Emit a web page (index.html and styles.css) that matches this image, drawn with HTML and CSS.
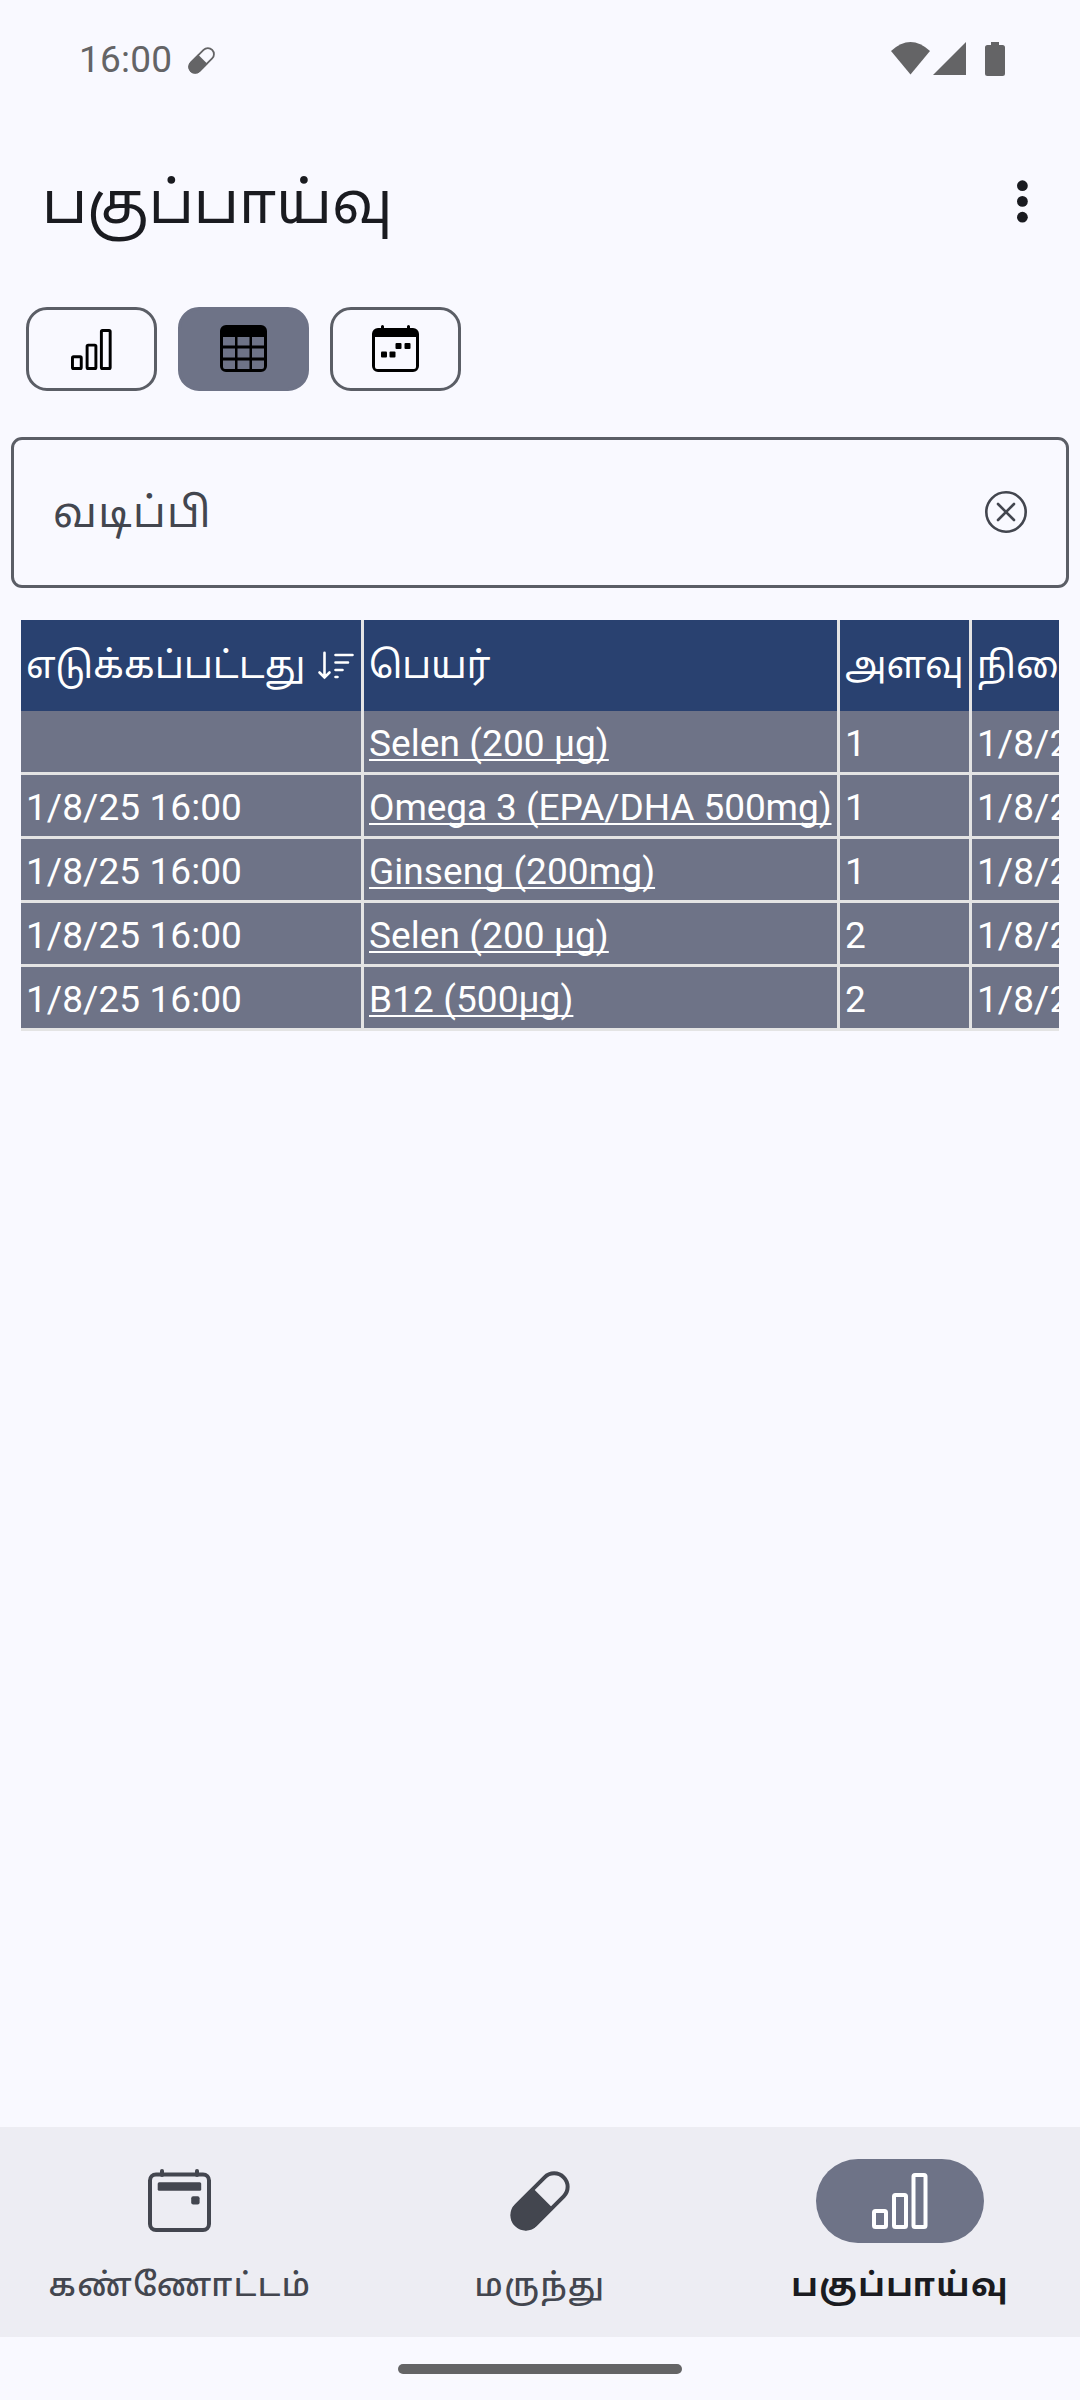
FILE: index.html
```html
<!DOCTYPE html>
<html lang="ta">
<head>
<meta charset="utf-8">
<title>பகுப்பாய்வு</title>
<link rel="stylesheet" href="styles.css">
</head>
<body>
<div class="screen">
  <header class="status">
    <span class="clock">16:00</span>
    <svg class="status-pill" viewBox="0 0 60 60"><g transform="rotate(-45 30 30)"><rect x="-3.500" y="16.500" width="67" height="27" rx="13.500" fill="none" stroke="currentColor" stroke-width="4"/><path d="M34 15H10a15 15 0 0 0 0 30H34Z" fill="currentColor"/></g></svg>
    <svg class="signals" viewBox="0 0 114 34"><g fill="currentColor"><path d="M0 9Q19.500-9 39 9L19.500 32.500Z"/><path d="M75 0V33H42Z"/><path d="M100 0h8v3h3.500q2.500 0 2.500 2.500v26q0 2.500-2.500 2.500h-15q-2.500 0-2.500-2.500v-26Q94 3 96.500 3H100Z"/></g></svg>
  </header>
  <div class="appbar">
    <h1 class="title">பகுப்பாய்வு</h1>
    <svg class="more" viewBox="0 0 12 44" fill="currentColor"><circle cx="6.400" cy="5.700" r="5.400"/><circle cx="6.400" cy="21.400" r="5.400"/><circle cx="6.400" cy="37.200" r="5.400"/></svg>
  </div>
  <div class="toggles">
    <button class="toggle"><svg class="icon-bars" viewBox="0 0 56 56" fill="none" stroke="currentColor" stroke-width="4"><rect x="2" y="38" width="12" height="16" rx="1.500"/><rect x="22" y="22" width="12" height="32" rx="1.500"/><rect x="41.500" y="2" width="12" height="52" rx="1.500"/></svg></button>
    <button class="toggle toggle-on"><svg class="icon-grid" viewBox="0 0 47 47"><path d="M6 0h35a6 6 0 0 1 6 6v35a6 6 0 0 1-6 6H6a6 6 0 0 1-6-6V6a6 6 0 0 1 6-6ZM3 12v8.500h12V12ZM17.500 12v8.500h12V12ZM32 12v8.500h12V12ZM3 23.500v9h12v-9ZM17.500 23.500v9h12v-9ZM32 23.500v9h12v-9ZM3 35.500V42q0 2 2 2h10v-8.500ZM17.500 35.500V44h12v-8.500ZM32 35.500V44h10q2 0 2-2v-6.500Z" fill="currentColor" fill-rule="evenodd"/></svg></button>
    <button class="toggle"><svg class="icon-grid" viewBox="0 0 47 47"><path d="M9 1.500q0-1.500 1.500-1.500T12 1.500V3H35V1.500Q35 0 36.500 0T38 1.500V3h3a6 6 0 0 1 6 6v32a6 6 0 0 1-6 6H6a6 6 0 0 1-6-6V9a6 6 0 0 1 6-6h3ZM3 12v30q0 2 2 2h37q2 0 2-2V12Z" fill="currentColor" fill-rule="evenodd"/><g fill="currentColor"><rect x="9" y="26.500" width="6" height="6" rx="1"/><rect x="17.500" y="26.500" width="6" height="6" rx="1"/><rect x="23.500" y="18" width="6" height="6" rx="1"/><rect x="32.500" y="18" width="6" height="6" rx="1"/></g></svg></button>
  </div>
  <div class="filter">
    <span class="filter-label">வடிப்பி</span>
    <svg class="clear" viewBox="0 0 42 42" fill="none" stroke="currentColor" stroke-width="2.600" stroke-linecap="round"><circle cx="21" cy="21" r="19.700"/><path d="M13 13L29 29M29 13L13 29"/></svg>
  </div>
  <div class="table">
    <div class="row head">
      <div class="cell"><span class="taken">எடுக்கப்பட்டது</span><svg class="sort" viewBox="0 0 36 28" fill="none" stroke="currentColor" stroke-width="2.600" stroke-linecap="round"><path d="M6.500 .8V25.500M1.500 20.500l5 5 5-5M17.500 3H34.500M17.500 10.500H30M17.500 18H24.500M17.500 25H19.500"/></svg></div>
      <div class="cell">பெயர்</div>
      <div class="cell">அளவு</div>
      <div class="cell">நினைவூட்டப்பட்டது</div>
    </div>
    <div class="row"><div class="cell"></div><div class="cell"><a class="name">Selen (200 µg)</a></div><div class="cell">1</div><div class="cell">1/8/25 16:00</div></div>
    <div class="row"><div class="cell">1/8/25 16:00</div><div class="cell"><a class="name name-long">Omega 3 (EPA/DHA 500mg)</a></div><div class="cell">1</div><div class="cell">1/8/25 16:00</div></div>
    <div class="row"><div class="cell">1/8/25 16:00</div><div class="cell"><a class="name">Ginseng (200mg)</a></div><div class="cell">1</div><div class="cell">1/8/25 16:00</div></div>
    <div class="row"><div class="cell">1/8/25 16:00</div><div class="cell"><a class="name">Selen (200 µg)</a></div><div class="cell">2</div><div class="cell">1/8/25 16:00</div></div>
    <div class="row"><div class="cell">1/8/25 16:00</div><div class="cell"><a class="name">B12 (500µg)</a></div><div class="cell">2</div><div class="cell">1/8/25 16:00</div></div>
  </div>
  <nav class="nav">
    <div class="tab">
      <span class="indicator"><svg class="nav-icon" viewBox="0 0 63 63"><rect x="2" y="5.500" width="59" height="55.500" rx="6" fill="none" stroke="currentColor" stroke-width="4"/><g fill="currentColor"><rect x="12" y="0" width="4" height="8" rx="2"/><rect x="47" y="0" width="4" height="8" rx="2"/><rect x="9.700" y="13.300" width="43.500" height="8.400" rx="1.500"/><rect x="43.200" y="27.200" width="8.400" height="8.400" rx="2"/></g></svg></span>
      <span class="label">கண்ணோட்டம்</span>
    </div>
    <div class="tab">
      <span class="indicator"><svg class="nav-icon pill" viewBox="0 0 60 60"><g transform="rotate(-45 30 30)"><rect x="-3.500" y="16.500" width="67" height="27" rx="13.500" fill="none" stroke="currentColor" stroke-width="4"/><path d="M34 15H10a15 15 0 0 0 0 30H34Z" fill="currentColor"/></g></svg></span>
      <span class="label">மருந்து</span>
    </div>
    <div class="tab tab-on">
      <span class="indicator"><svg class="nav-bars" viewBox="0 0 56 56" fill="none" stroke="currentColor" stroke-width="4"><rect x="2" y="38" width="12" height="16" rx="1.500"/><rect x="22" y="22" width="12" height="32" rx="1.500"/><rect x="41.500" y="2" width="12" height="52" rx="1.500"/></svg></span>
      <span class="label">பகுப்பாய்வு</span>
    </div>
  </nav>
  <div class="gesture"><div class="handle"></div></div>
</div>
</body>
</html>
```
FILE: styles.css
```css
* { box-sizing: border-box; }
body { margin: 0; background: #f9f9ff; }
svg { display: block; flex: none; overflow: visible; }
.screen { width: 1080px; height: 2400px; display: flex; flex-direction: column; overflow: hidden; font-family: Roboto, "Noto Sans Tamil", "Noto Sans", sans-serif; color: #1a1b20; }
.status { height: 118px; padding: 0 75px 0 79px; display: flex; align-items: center; color: #646466; }
.clock { padding-top: 2px; font-size: 37px; line-height: 44px; letter-spacing: .2px; }
.status-pill { width: 27px; height: 27px; margin: 3px 0 0 16px; }
.signals { width: 114px; height: 34px; margin-left: auto; }
.appbar { height: 168px; padding: 0 52px 0 42px; display: flex; align-items: center; justify-content: space-between; }
.title { margin: 0; padding-top: 1px; font-size: 58px; line-height: 70px; font-weight: 400; white-space: nowrap; }
.more { width: 12px; height: 44px; }
.toggles { margin-top: 21px; padding-left: 26px; display: flex; gap: 21px; }
.toggle { width: 131px; height: 84px; padding: 0; border: 3px solid #5b5e66; border-radius: 21px; background: none; color: #000; display: flex; align-items: center; justify-content: center; }
.toggle-on { background: #6e7387; border-color: #6e7387; }
.icon-bars { width: 41px; height: 41px; }
.icon-grid { width: 47px; height: 47px; margin-bottom: 1px; }
.filter { margin: 46px 11px 0; height: 151px; padding: 0 39px; border: 3px solid #5b5e66; border-radius: 11px; display: flex; align-items: center; justify-content: space-between; color: #43464f; }
.filter-label { font-size: 42px; line-height: 50px; letter-spacing: 1.3px; white-space: nowrap; }
.clear { width: 42px; height: 42px; margin-bottom: 1px; }
.table { margin: 32px 21px 0; overflow: hidden; color: #fff; font-size: 37px; line-height: 44px; }
.row { display: grid; grid-template-columns: 340px 473px 129px 340px; column-gap: 3px; width: 1291px; height: 64px; border-bottom: 3px solid #e4e4e4; background: #e4e4e4; letter-spacing: .08px; }
.cell { padding: 5px 5px 0; background: #6e7387; display: flex; align-items: center; white-space: nowrap; }
.head { height: 91px; border: 0; letter-spacing: 0; }
.head .cell { padding-top: 1px; background: #294170; }
.taken { letter-spacing: .3px; }
.sort { width: 36px; height: 28px; margin: 0 2px 1px auto; }
.name { text-decoration: underline; text-decoration-skip-ink: none; text-decoration-thickness: 2px; text-underline-offset: 3px; }
.name-long { letter-spacing: -.08px; }
.nav { margin-top: auto; height: 210px; padding: 32px 0 0; background: #ededf3; display: grid; grid-template-columns: repeat(3, 1fr); color: #43464f; }
.tab { display: flex; flex-direction: column; align-items: center; }
.indicator { width: 168px; height: 84px; border-radius: 42px; display: flex; align-items: center; justify-content: center; }
.label { margin-top: 21px; font-size: 32px; line-height: 42px; font-weight: 500; letter-spacing: 1.4px; white-space: nowrap; }
.nav-icon { width: 63px; height: 63px; margin-right: 1px; margin-bottom: 1px; }
.pill { width: 60px; height: 60px; margin: 0; }
.nav-bars { width: 56px; height: 56px; margin-right: 1px; margin-bottom: 1px; }
.tab-on .indicator { background: #6e7387; color: #fff; }
.tab-on .label { font-weight: 700; color: #1a1b20; }
.gesture { height: 63px; display: flex; justify-content: center; padding-top: 27px; }
.handle { width: 284px; height: 10px; border-radius: 5px; background: #646466; }
```
